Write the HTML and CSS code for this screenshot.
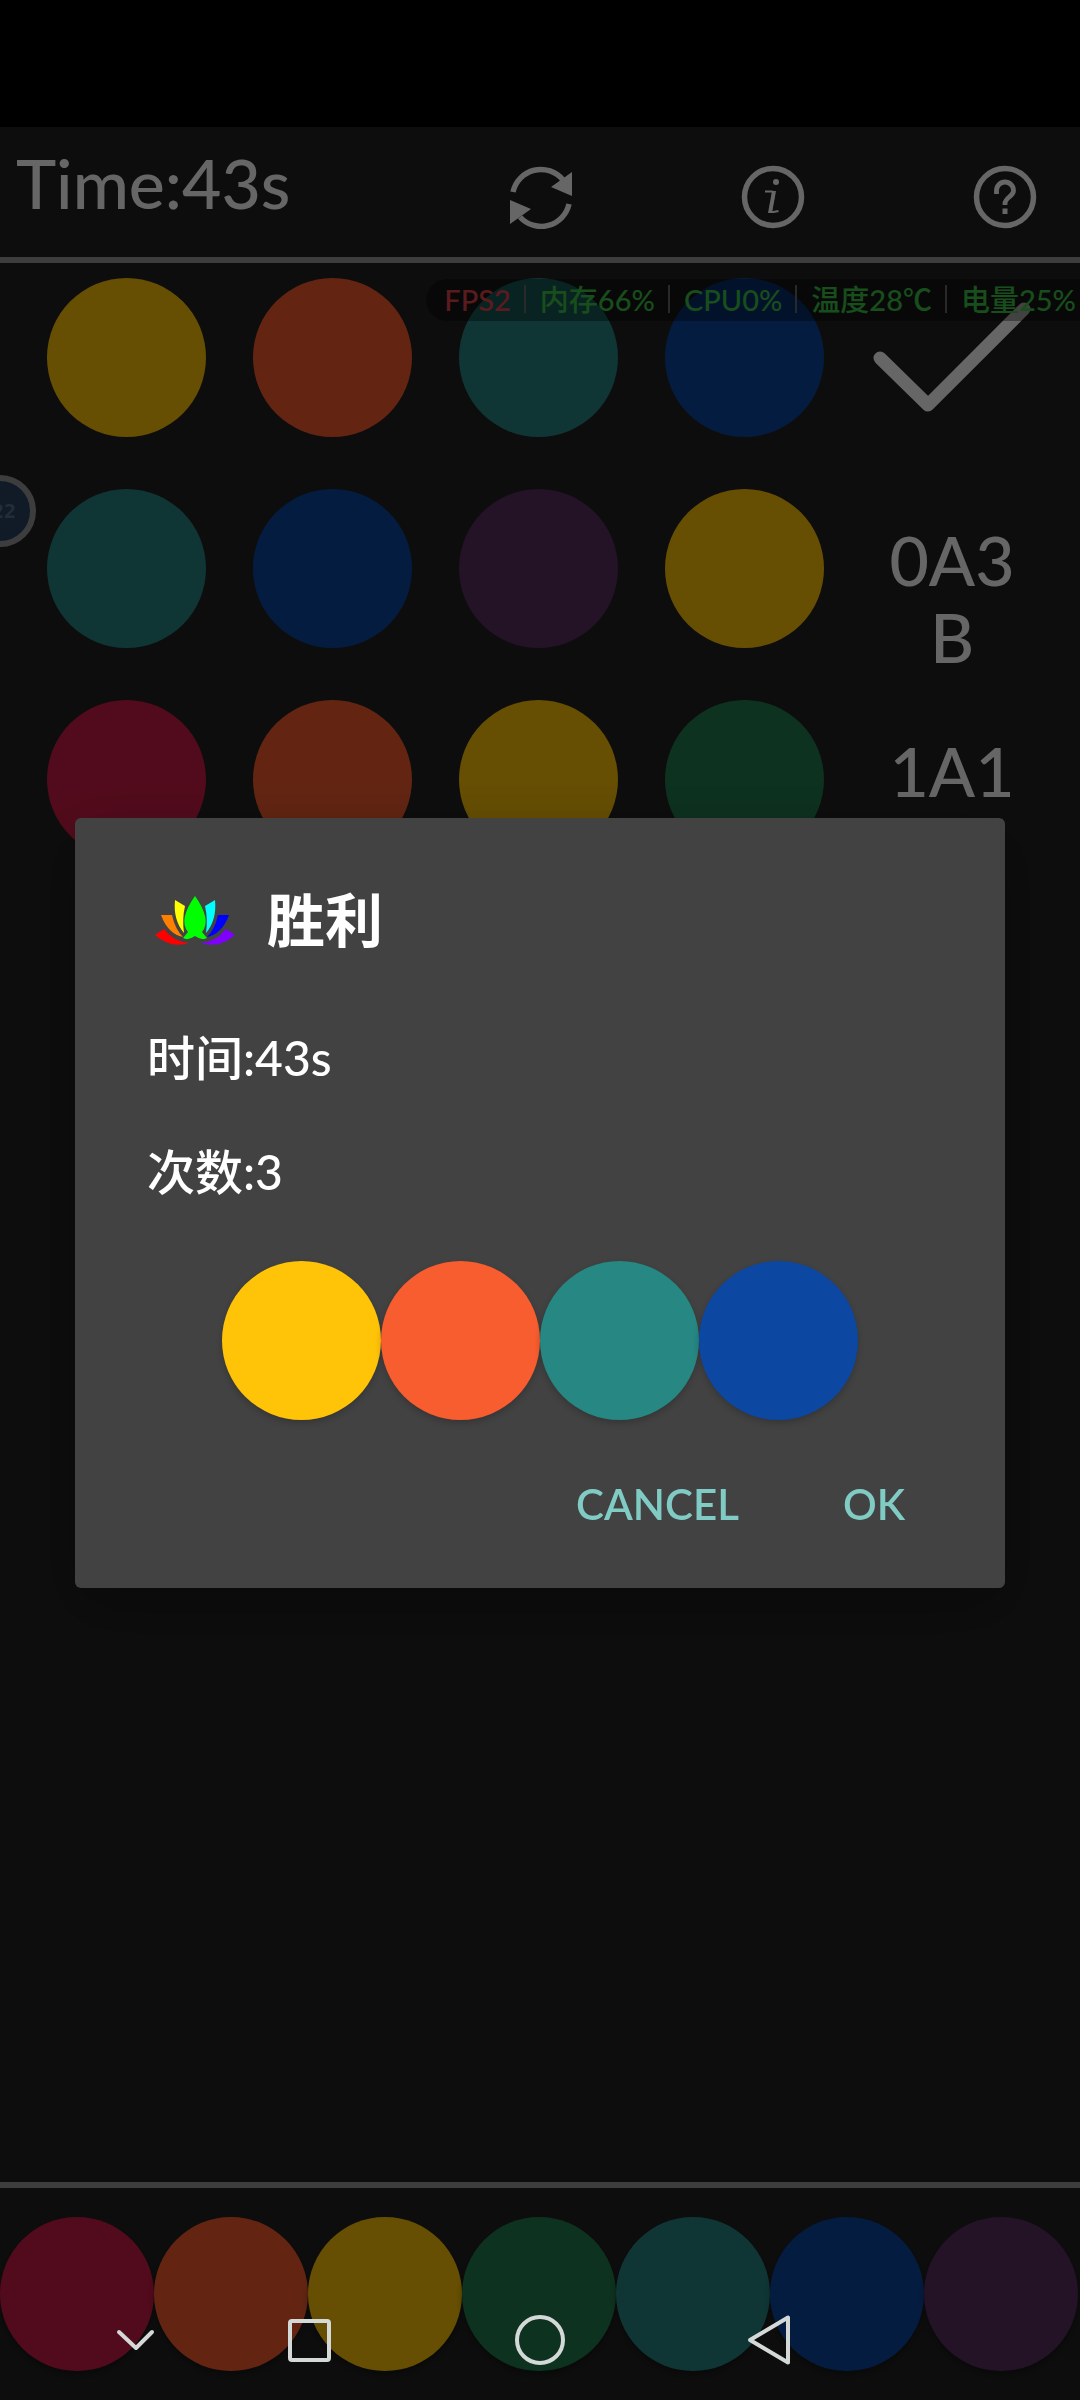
FILE: index.html
```html
<!DOCTYPE html>
<html lang="zh">
<head>
    <meta charset="UTF-8">
    <meta name="viewport" content="width=device-width, initial-scale=1.0">
    <title>胜利</title>
    <link rel="stylesheet" href="styles.css">
</head>
<body>
    <div class="app">
        <div class="status-bar"></div>
        <header class="header">
            <h1 class="timer">Time:43s</h1>
            <div class="tools">
                <button type="button" class="tool" aria-label="Restart">
                    <svg width="64" height="64" viewBox="0 0 64 64">
                        <path d="M4 27A28.500 28.500 0 0 1 54 15M60 39A28.500 28.500 0 0 1 11 52" fill="none" stroke="#fff" stroke-width="5.500"/>
                        <path d="M63 7v24L42 22zM1 35l21 9L1 59z" fill="#fff"/>
                    </svg>
                </button>
                <button type="button" class="tool" aria-label="Info">
                    <svg width="64" height="64" viewBox="0 0 64 64">
                        <circle cx="32" cy="32" r="28.500" fill="none" stroke="#fff" stroke-width="5.500"/>
                        <circle cx="35" cy="17" r="3" fill="#fff"/>
                        <path d="M24 26.500h6.500c2 0 3 1 2.600 3L30 44.500q-.6 3 2.500 2.500l5-1" fill="none" stroke="#fff" stroke-width="2"/>
                        <path d="M31 26h4l-4 22h-4z" fill="#fff"/>
                    </svg>
                </button>
                <button type="button" class="tool" aria-label="Help">
                    <svg width="64" height="64" viewBox="0 0 64 64">
                        <circle cx="32" cy="32" r="28.500" fill="none" stroke="#fff" stroke-width="5.500"/>
                        <path d="M23.500 29v-3.500a8.500 8.500 0 0 1 17 0c0 6-8.500 7-8.500 13v1.500" fill="none" stroke="#fff" stroke-width="4.800"/>
                        <path d="M29.500 43.500h5v5.500h-5z" fill="#fff"/>
                    </svg>
                </button>
            </div>
        </header>

        <main class="board">
            <div class="guess">
                <div class="pegs">
                    <span class="peg yellow"></span>
                    <span class="peg orange"></span>
                    <span class="peg teal"></span>
                    <span class="peg blue"></span>
                </div>
                <div class="result">
                    <svg class="check" width="160" height="159" viewBox="0 0 160 159">
                        <path d="M8 80L56 127L152 31" fill="none" stroke="#fff" stroke-width="13" stroke-linecap="round" stroke-linejoin="round"/>
                    </svg>
                </div>
            </div>
            <div class="guess">
                <div class="pegs">
                    <span class="peg teal"></span>
                    <span class="peg blue"></span>
                    <span class="peg purple"></span>
                    <span class="peg yellow"></span>
                </div>
                <div class="result"><p class="score">0A3B</p></div>
            </div>
            <div class="guess">
                <div class="pegs">
                    <span class="peg crimson"></span>
                    <span class="peg orange"></span>
                    <span class="peg yellow"></span>
                    <span class="peg green"></span>
                </div>
                <div class="result"><p class="score">1A1B</p></div>
            </div>
        </main>

        <div class="palette">
            <button type="button" class="color crimson" aria-label="Crimson"></button>
            <button type="button" class="color orange" aria-label="Orange"></button>
            <button type="button" class="color yellow" aria-label="Yellow"></button>
            <button type="button" class="color green" aria-label="Green"></button>
            <button type="button" class="color teal" aria-label="Teal"></button>
            <button type="button" class="color blue" aria-label="Blue"></button>
            <button type="button" class="color purple" aria-label="Purple"></button>
        </div>
    </div>

    <!-- performance monitor -->
    <div class="monitor">
        <span class="low">FPS2</span>
        <span>内存66%</span>
        <span>CPU0%</span>
        <span>温度28℃</span>
        <span>电量25%</span>
    </div>
    <div class="float-ball">22</div>

    <div class="overlay">
        <div class="dialog" role="dialog" aria-labelledby="dialogTitle">
            <div class="dialog-head">
                <svg class="logo" width="96" height="96" viewBox="0 0 96 96">
                    <path d="M8 63L17 57Q27 70 42 71Q24 77 8 63z" fill="#f00"/>
                    <path d="M14 43H25Q28 57 36 65Q21 62 14 43z" fill="#ff7f00"/>
                    <path d="M28 28L38 34Q35 47 37 61Q26 48 28 28z" fill="#ff0"/>
                    <path d="M48 24Q65 48 55 60L60 66Q55 69 48 64Q41 69 36 66L41 60Q31 48 48 24z" fill="#0f0"/>
                    <path d="M68 28L58 34Q61 47 59 61Q70 48 68 28z" fill="#0ff"/>
                    <path d="M82 43H71Q68 57 60 65Q75 62 82 43z" fill="#00f"/>
                    <path d="M88 63L79 57Q69 70 54 71Q72 77 88 63z" fill="#8000ff"/>
                </svg>
                <h2 id="dialogTitle">胜利</h2>
            </div>
            <div class="dialog-body">
                <p>时间:43s</p>
                <p>次数:3</p>
            </div>
            <div class="answer">
                <span class="peg yellow"></span>
                <span class="peg orange"></span>
                <span class="peg teal"></span>
                <span class="peg blue"></span>
            </div>
            <div class="button-group">
                <button type="button">CANCEL</button>
                <button type="button">OK</button>
            </div>
        </div>
    </div>

    <nav class="nav-bar">
        <button type="button" class="nav-hide" aria-label="Hide">
            <svg width="60" height="60" viewBox="0 0 60 60"><path d="M13 22L30 38L46 22"/></svg>
        </button>
        <button type="button" aria-label="Recent">
            <svg width="60" height="60" viewBox="0 0 60 60"><rect x="11" y="11" width="39" height="39" rx="2"/></svg>
        </button>
        <button type="button" aria-label="Home">
            <svg width="60" height="60" viewBox="0 0 60 60"><circle cx="30" cy="30" r="23"/></svg>
        </button>
        <button type="button" aria-label="Back">
            <svg width="60" height="60" viewBox="0 0 60 60"><path d="M9 30L47 7.500V52.500z"/></svg>
        </button>
    </nav>
</body>
</html>
```
FILE: styles.css
```css
* {
    box-sizing: border-box;
}
body {
    margin: 0;
    background: #222;
    color: #fff;
    font-family: Lato, "Noto Sans CJK SC", sans-serif;
    font-weight: 500;
}
h1, h2, p {
    margin: 0;
    font-weight: 500;
}
button {
    border: 0;
    padding: 0;
    background: none;
    color: inherit;
    font-family: inherit;
}
svg {
    display: block;
}
.app {
    display: flex;
    flex-direction: column;
    min-height: 100vh;
}
.status-bar {
    height: 127px;
    background: #000;
}
.header {
    display: flex;
    justify-content: space-between;
    align-items: flex-start;
    height: 136px;
    padding: 15px 0 0 16px;
    border-bottom: 6px solid #999;
}
.timer {
    font-size: 68px;
    line-height: 82px;
}
.tools {
    display: flex;
    gap: 82px;
}
.tool {
    display: flex;
    justify-content: center;
    align-items: center;
    width: 150px;
    height: 110px;
}

/* guesses */
.board {
    flex: 1;
    display: flex;
    flex-direction: column;
    gap: 52px;
    padding: 15px 0;
}
.guess {
    display: flex;
    height: 159px;
}
.pegs {
    display: flex;
    gap: 47px;
    padding-left: 47px;
}
.peg {
    width: 159px;
    height: 159px;
    border-radius: 50%;
}
.result {
    flex: 1;
    display: flex;
    justify-content: center;
}
.score {
    width: 140px;
    padding-top: 32px;
    font-size: 68px;
    line-height: 77px;
    text-align: center;
    word-break: break-all;
}
.crimson { background: #cd1c46; }
.orange { background: #f75d2f; }
.yellow { background: #ffc408; }
.green { background: #237d50; }
.teal { background: #268783; }
.blue { background: #0c47a1; }
.purple { background: #5a2d60; }

.palette {
    display: flex;
    padding: 29px 0;
    border-top: 6px solid #999;
}
.color {
    width: 154px;
    height: 154px;
    border-radius: 50%;
    box-shadow: 0 4px 6px rgba(0, 0, 0, 0.3);
}

/* system widgets floating over the game */
.monitor {
    position: absolute;
    top: 279px;
    right: 0;
    display: flex;
    height: 42px;
    padding: 0 4px 0 18px;
    border-radius: 21px 0 0 21px;
    background: rgba(0, 0, 0, 0.35);
    color: #3cc048;
    font-size: 29px;
    line-height: 42px;
}
.monitor span + span {
    margin-left: 13px;
    padding-left: 16px;
    background: linear-gradient(#666, #666) no-repeat 0 6px / 2px 28px;
}
.monitor .low {
    color: #e0444c;
}
.float-ball {
    position: absolute;
    top: 475px;
    left: -36px;
    width: 72px;
    height: 72px;
    padding-right: 14px;
    border: 6px solid #999;
    border-radius: 50%;
    background: #2b4463;
    color: #56708f;
    font: bold 20px/60px "DejaVu Sans Mono", monospace;
    text-align: right;
}

/* dialog */
.overlay {
    position: fixed;
    inset: 0;
    display: flex;
    justify-content: center;
    align-items: center;
    padding: 6px 75px 0;
    background: rgba(0, 0, 0, 0.6);
}
.dialog {
    flex: 1;
    padding: 54px 0 30px;
    border-radius: 6px;
    background: #424242;
    box-shadow: 0 20px 60px rgba(0, 0, 0, 0.3);
}
.dialog-head {
    display: flex;
    align-items: center;
    gap: 24px;
    padding: 0 72px;
}
.dialog-head h2 {
    font-size: 58px;
    font-weight: 700;
    line-height: 96px;
}
.dialog-body {
    display: flex;
    flex-direction: column;
    gap: 56px;
    padding: 61px 72px 60px;
    font-size: 48px;
    line-height: 58px;
}
.answer {
    display: flex;
    justify-content: center;
}
.answer .peg {
    box-shadow: 0 3px 6px rgba(0, 0, 0, 0.2);
}
.button-group {
    display: flex;
    justify-content: flex-end;
    gap: 4px;
    margin: 30px 50px 0;
}
.button-group button {
    height: 108px;
    padding: 0 50px;
    color: #80cbc4;
    font-size: 42px;
    font-weight: 600;
}

/* navigation bar */
.nav-bar {
    position: fixed;
    left: 0;
    right: 0;
    bottom: 0;
    display: flex;
    height: 120px;
    padding: 0 194px 0 78px;
}
.nav-bar button {
    flex: 2;
    display: flex;
    justify-content: center;
    align-items: center;
}
.nav-bar .nav-hide {
    flex: 1;
}
.nav-bar svg {
    fill: none;
    stroke: #d4d9d8;
    stroke-width: 4;
    stroke-linecap: round;
    stroke-linejoin: round;
}
```
